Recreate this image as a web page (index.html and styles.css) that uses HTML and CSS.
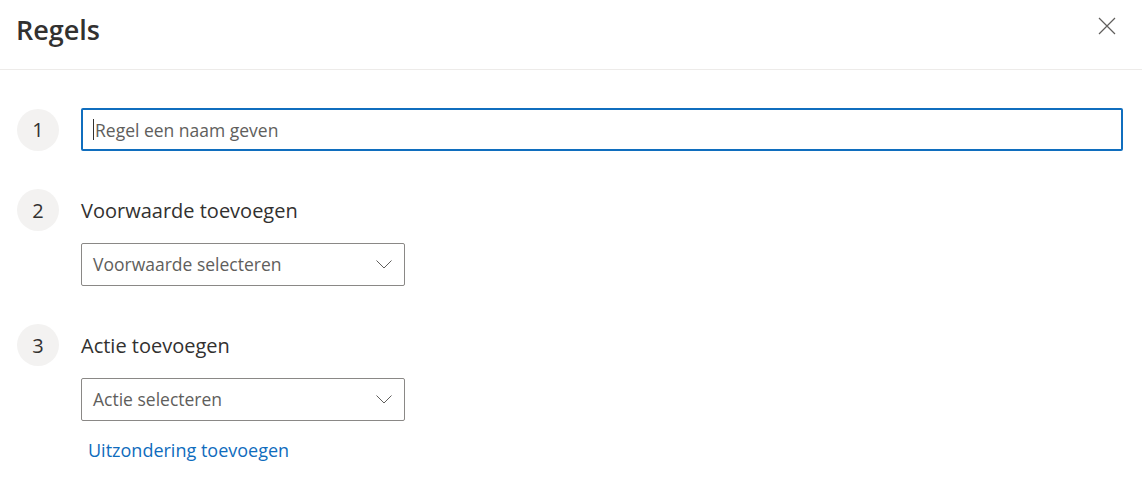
FILE: index.html
```html
<!DOCTYPE html>
<html lang="nl">
  <head>
    <meta charset="UTF-8" />
    <meta name="viewport" content="width=device-width, initial-scale=1.0" />
    <title>Regels</title>
    <link rel="stylesheet" href="styles.css">
  </head>
  <body>
    <div class="panel">
      <header class="panel-header">
        <h1>Regels</h1>
        <button class="close" aria-label="Sluiten">
          <svg width="18" height="18" viewBox="0 0 18 18">
            <path d="M1 1 L17 17 M17 1 L1 17" stroke="#605e5c" stroke-width="1.2" fill="none" />
          </svg>
        </button>
      </header>

      <div class="panel-body">
        <div class="step">
          <span class="step-num">1</span>
          <div class="name-field">
            <span class="caret"></span>
            <input type="text" class="name-input" placeholder="Regel een naam geven" />
          </div>
        </div>

        <div class="step">
          <span class="step-num">2</span>
          <span class="step-title">Voorwaarde toevoegen</span>
          <div class="dropdown">
            <span>Voorwaarde selecteren</span>
            <svg width="16" height="9" viewBox="0 0 16 9">
              <path d="M0.5 0.5 L8 8 L15.5 0.5" stroke="#605e5c" stroke-width="1" fill="none" />
            </svg>
          </div>
        </div>

        <div class="step">
          <span class="step-num">3</span>
          <span class="step-title">Actie toevoegen</span>
          <div class="dropdown">
            <span>Actie selecteren</span>
            <svg width="16" height="9" viewBox="0 0 16 9">
              <path d="M0.5 0.5 L8 8 L15.5 0.5" stroke="#605e5c" stroke-width="1" fill="none" />
            </svg>
          </div>
          <a href="#" class="link">Uitzondering toevoegen</a>
        </div>
      </div>
    </div>
  </body>
</html>
```

FILE: styles.css
```css
body {
  margin: 0;
  background: #fff;
  font-family: "Open Sans", "Noto Sans", Arial, sans-serif;
  color: #323130;
}
.panel-header {
  display: flex;
  align-items: center;
  justify-content: space-between;
  height: 69px;
  padding: 0 26px 0 16px;
  border-bottom: 1px solid #edebe9;
}
.panel-header h1 {
  margin: 0;
  font-size: 27px;
  font-weight: 600;
  margin-top: -10px;
}
.close {
  background: none;
  border: none;
  padding: 0;
  margin-top: -17px;
  width: 18px;
  height: 18px;
  cursor: pointer;
}
.close svg {
  display: block;
}
.panel-body {
  padding: 38px 19px 0 17px;
}
.step {
  display: grid;
  grid-template-columns: 42px 1fr;
  column-gap: 22px;
  row-gap: 12px;
  align-items: center;
  margin-bottom: 38px;
}
.step-num {
  width: 42px;
  height: 42px;
  border-radius: 50%;
  background: #f3f2f1;
  display: flex;
  align-items: center;
  justify-content: center;
  font-size: 20px;
}
.step-title {
  font-size: 20px;
}
.name-field {
  position: relative;
}
.name-input {
  box-sizing: border-box;
  width: 100%;
  height: 43px;
  padding: 0 11px 0 12px;
  border: 2px solid #106ebe;
  border-radius: 2px;
  font-family: inherit;
  font-size: 17.5px;
  color: #323130;
  outline: none;
}
.name-input::placeholder {
  color: #605e5c;
}
.caret {
  position: absolute;
  left: 12px;
  top: 11px;
  width: 1px;
  height: 21px;
  background: #323130;
}
.dropdown {
  grid-column: 2;
  box-sizing: border-box;
  width: 324px;
  height: 43px;
  display: flex;
  align-items: center;
  justify-content: space-between;
  padding: 0 12px 0 11px;
  border: 1px solid #8a8886;
  border-radius: 2px;
  font-size: 17.5px;
  color: #605e5c;
}
.dropdown span {
  margin-top: -2px;
}
.dropdown svg {
  display: block;
}
.link {
  grid-column: 2;
  justify-self: start;
  margin: 5px 0 0 7px;
  font-size: 18px;
  color: #0f6cbd;
  text-decoration: none;
}
```
